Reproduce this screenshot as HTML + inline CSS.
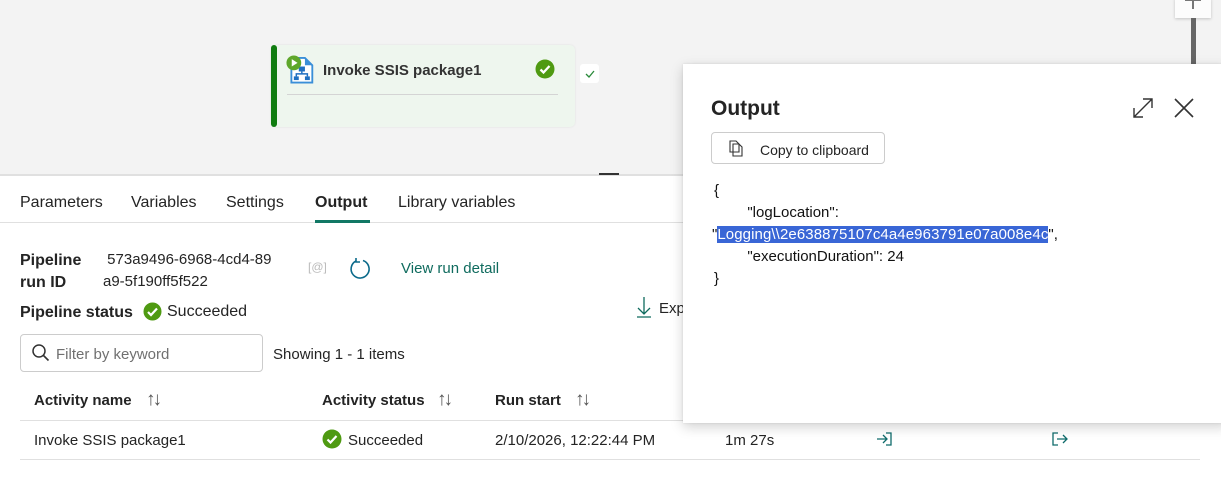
<!DOCTYPE html>
<html><head><meta charset="utf-8"><style>
*{margin:0;padding:0;box-sizing:border-box}
body{width:1221px;height:490px;overflow:hidden;background:#fff;font-family:"Liberation Sans",sans-serif;color:#242424;position:relative}
.a{position:absolute;white-space:nowrap}
.s{font-size:19px;color:#555;font-weight:normal;letter-spacing:-3px}
</style></head><body>
<div class="a" style="left:0;top:0;width:1221px;height:174px;background:#f3f3f3"></div>
<div class="a" style="left:0;top:174px;width:1221px;height:2px;background:#e0e0e0"></div>
<div class="a" style="left:599px;top:173px;width:20px;height:2px;background:#333"></div>
<!-- zoom control -->
<div class="a" style="left:1175px;top:-2px;width:36px;height:20px;background:#fcfcfc;box-shadow:0 1px 3px rgba(0,0,0,.2)"></div>
<div class="a" style="left:1192px;top:0;width:2px;height:9px;background:#777"></div>
<div class="a" style="left:1185px;top:0;width:16px;height:1px;background:#777"></div>
<div class="a" style="left:1191px;top:18px;width:5px;height:46px;background:#666"></div>
<!-- activity node -->
<div class="a" style="left:271px;top:45px;width:304px;height:82px;background:#eef6ee;border-radius:5px;box-shadow:0 0 2px rgba(0,0,0,.08)"></div>
<div class="a" style="left:271px;top:45px;width:6px;height:82px;background:#107c10;border-radius:3px"></div>
<svg class="a" style="left:284px;top:53px" width="32" height="32" viewBox="0 0 26 26">
<path d="M6 4h11l6 6v14H6z" fill="#fff" stroke="#3a8fd8" stroke-width="1.5"/>
<path d="M17 4v6h6" fill="#3a8fd8"/>
<rect x="12" y="11" width="5" height="4" fill="#1e6fc1"/><rect x="8" y="19" width="4" height="3" fill="#1e6fc1"/><rect x="17" y="19" width="4" height="3" fill="#1e6fc1"/>
<path d="M14.5 15v2M10 19v-2h9v2" stroke="#1e6fc1" fill="none" stroke-width="1.2"/>
<circle cx="8" cy="8" r="6" fill="#5ea72a"/><path d="M6.3 5v6l4.7-3z" fill="#fff"/></svg>
<div class="a" style="left:323px;top:62px;font-size:15px;font-weight:bold;color:#333">Invoke SSIS package1</div>
<svg class="a" style="left:535px;top:59px" width="20" height="20"><circle cx="10" cy="10" r="9.5" fill="#4f9a12"/><path d="M5.5 10.5l3 3 6-6.5" stroke="#fff" stroke-width="2.3" fill="none"/></svg>
<div class="a" style="left:287px;top:94px;width:271px;height:1px;background:#d4d4d4"></div>
<div class="a" style="left:580px;top:64px;width:19px;height:19px;background:#fff;border-radius:3px"></div>
<svg class="a" style="left:584px;top:68px" width="12" height="12"><path d="M2 6l3 3 5-6" stroke="#2a8a3a" stroke-width="1.3" fill="none"/></svg>
<!-- tabs -->
<div class="a" style="left:20px;top:194px;font-size:16px">Parameters</div>
<div class="a" style="left:131px;top:194px;font-size:16px">Variables</div>
<div class="a" style="left:226px;top:194px;font-size:16px">Settings</div>
<div class="a" style="left:315px;top:194px;font-size:16px;font-weight:bold">Output</div>
<div class="a" style="left:398px;top:194px;font-size:16px">Library variables</div>
<div class="a" style="left:0;top:222px;width:700px;height:1px;background:#e0e0e0"></div>
<div class="a" style="left:315px;top:220px;width:55px;height:3px;background:#117865"></div>
<!-- pipeline info -->
<div class="a" style="left:20px;top:250px;font-size:16px;font-weight:bold;line-height:22px">Pipeline<br>run ID</div>
<div class="a" style="left:103px;top:249px;font-size:15px;line-height:22px">&nbsp;573a9496-6968-4cd4-89<br>a9-5f190ff5f522</div>
<div class="a" style="left:308px;top:260px;font-size:12px;color:#bbb">[@]</div>
<svg class="a" style="left:348px;top:256px" width="24" height="24"><path d="M8 5A9 9 0 1 0 15 4.5" stroke="#0b6a8a" stroke-width="1.6" fill="none"/><path d="M8 2v4h4" stroke="#0b6a8a" stroke-width="1.6" fill="none"/></svg>
<div class="a" style="left:401px;top:260px;font-size:15px;color:#0f6b5e">View run detail</div>
<div class="a" style="left:20px;top:304px;font-size:16px;font-weight:bold">Pipeline status</div>
<svg class="a" style="left:143px;top:302px" width="19" height="19"><circle cx="9.5" cy="9.5" r="9" fill="#4f9a12"/><path d="M5 10l3 3 6-6.5" stroke="#fff" stroke-width="2.2" fill="none"/></svg>
<div class="a" style="left:167px;top:303px;font-size:16px">Succeeded</div>
<svg class="a" style="left:636px;top:296px" width="16" height="22"><path d="M8 1v17M2 12l6 6 6-6M1 21h14" stroke="#0f6b5e" stroke-width="1.3" fill="none"/></svg>
<div class="a" style="left:659px;top:300px;font-size:15px">Exp</div>
<!-- filter -->
<div class="a" style="left:20px;top:334px;width:243px;height:38px;border:1px solid #ccc;border-radius:4px"></div>
<svg class="a" style="left:31px;top:343px" width="20" height="20"><circle cx="8" cy="8" r="6" stroke="#333" stroke-width="1.5" fill="none"/><path d="M12.5 12.5l5 5" stroke="#333" stroke-width="1.6"/></svg>
<div class="a" style="left:56px;top:346px;font-size:15px;color:#707070">Filter by keyword</div>
<div class="a" style="left:273px;top:346px;font-size:15px">Showing 1 - 1 items</div>
<!-- table -->
<div class="a" style="left:34px;top:392px;font-size:15px;font-weight:bold">Activity name</div>
<div class="a s" style="left:146px;top:389px">↑↓</div>
<div class="a" style="left:322px;top:392px;font-size:15px;font-weight:bold">Activity status</div>
<div class="a s" style="left:437px;top:389px">↑↓</div>
<div class="a" style="left:495px;top:392px;font-size:15px;font-weight:bold">Run start</div>
<div class="a s" style="left:575px;top:389px">↑↓</div>
<div class="a" style="left:20px;top:420px;width:1180px;height:1px;background:#e0e0e0"></div>
<div class="a" style="left:34px;top:432px;font-size:15px">Invoke SSIS package1</div>
<svg class="a" style="left:322px;top:429px" width="20" height="20"><circle cx="10" cy="10" r="9.5" fill="#4f9a12"/><path d="M5.5 10.5l3 3 6-6.5" stroke="#fff" stroke-width="2.2" fill="none"/></svg>
<div class="a" style="left:348px;top:432px;font-size:15px">Succeeded</div>
<div class="a" style="left:495px;top:432px;font-size:15px">2/10/2026, 12:22:44 PM</div>
<div class="a" style="left:725px;top:432px;font-size:15px">1m 27s</div>
<svg class="a" style="left:876px;top:431px" width="18" height="16"><path d="M1 8h10M7 4l4 4-4 4M10 2h5v12h-5" stroke="#0f6b6b" stroke-width="1.3" fill="none"/></svg>
<svg class="a" style="left:1051px;top:431px" width="18" height="16"><path d="M7 2H2v12h5M6 8h10M12 4l4 4-4 4" stroke="#0f6b6b" stroke-width="1.3" fill="none"/></svg>
<div class="a" style="left:20px;top:459px;width:1180px;height:1px;background:#e0e0e0"></div>
<!-- output panel -->
<div class="a" style="left:683px;top:64px;width:545px;height:359px;background:#fff;box-shadow:0 4px 12px rgba(0,0,0,.18),0 0 2px rgba(0,0,0,.1)"></div>
<div class="a" style="left:711px;top:97px;font-size:21px;font-weight:bold;color:#242424">Output</div>
<svg class="a" style="left:1132px;top:97px" width="22" height="22"><path d="M2 20L20 2M11 2h9v9M2 11v9h9" stroke="#333" stroke-width="1.4" fill="none"/></svg>
<svg class="a" style="left:1173px;top:97px" width="22" height="22"><path d="M2 2l18 18M20 2L2 20" stroke="#333" stroke-width="1.6"/></svg>
<div class="a" style="left:711px;top:132px;width:174px;height:32px;border:1px solid #ccc;border-radius:4px"></div>
<svg class="a" style="left:726px;top:138px" width="20" height="20"><path d="M4 3h6l3 3v8H4z M7 6h6l3 3v9H7z" stroke="#333" stroke-width="1.1" fill="#fff"/></svg>
<div class="a" style="left:760px;top:142px;font-size:14px">Copy to clipboard</div>
<div class="a" style="left:714px;top:180px;font-size:15px;line-height:22px;color:#111">{<br>&nbsp;&nbsp;&nbsp;&nbsp;&nbsp;&nbsp;&nbsp;&nbsp;"logLocation":<br><span style="margin-left:-2px">"</span><span style="background:#3966d6;color:#fff;letter-spacing:0.1px">Logging\\2e638875107c4a4e963791e07a008e4c</span>",<br>&nbsp;&nbsp;&nbsp;&nbsp;&nbsp;&nbsp;&nbsp;&nbsp;"executionDuration": 24<br>}</div>
</body></html>
